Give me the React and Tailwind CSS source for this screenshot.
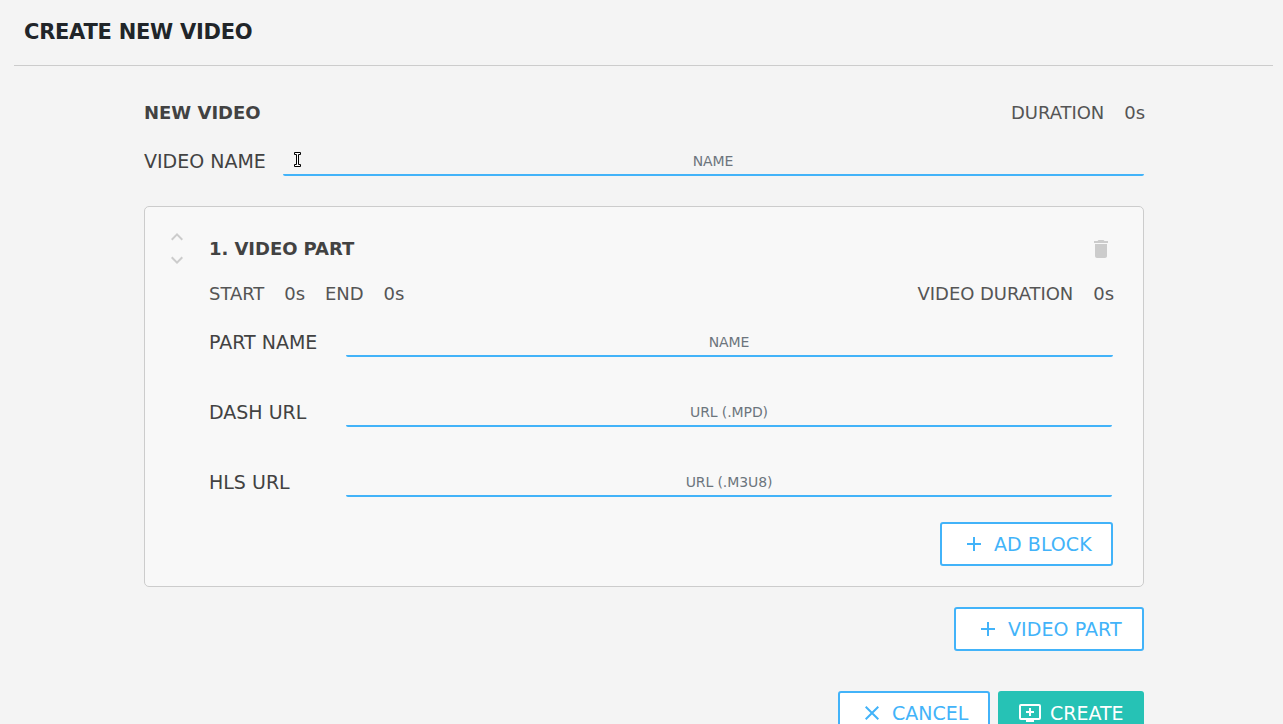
import React from "react";
import { MdDelete, MdKeyboardArrowDown, MdKeyboardArrowUp } from "react-icons/md";

function Field({ label, placeholder, labelClass, inputClass = "" }) {
  return (
    <div className="flex h-[35px]">
      <label className={`${labelClass} shrink-0 pt-[5px] text-[19px] leading-[30px] text-[#424242]`}>{label}</label>
      <input
        className={`${inputClass} h-[35px] min-w-0 flex-1 rounded-[2px] border-b-2 border-[#42b3f9] bg-transparent pt-[6px] pb-0 text-center text-[14px] tracking-[-0.1px] outline-none placeholder:text-[#6c757d]`}
        placeholder={placeholder}
      />
    </div>
  );
}

function Plus() {
  return (
    <svg className="h-[14px] w-[14px]" viewBox="0 0 14 14" fill="currentColor">
      <path d="M6 0h2v6h6v2H8v6H6V8H0V6h6z" />
    </svg>
  );
}

function Cross() {
  return (
    <svg className="h-[14px] w-[14px]" viewBox="0 0 14 14" fill="none" stroke="currentColor" strokeWidth="2">
      <path d="M.7.7l12.6 12.6M13.3.7L.7 13.3" />
    </svg>
  );
}

function AddScreen() {
  return (
    <svg className="h-[20px] w-[22px]" viewBox="0 0 22 20" fill="currentColor">
      <path fillRule="evenodd" d="M2 1h18a2 2 0 0 1 2 2v12a2 2 0 0 1-2 2h-5v2H7v-2H2a2 2 0 0 1-2-2V3a2 2 0 0 1 2-2zm0 2v12h18V3zM10 5h2v3h3v2h-3v3h-2v-3H7V8h3z" />
    </svg>
  );
}

const outline = "flex h-[44px] items-center rounded-[3px] border-2 border-[#42b3f9] bg-white text-[19px] text-[#42b3f9]";

export default function App() {
  return (
    <div className="h-[724px] overflow-hidden bg-[#f4f4f4] font-['DejaVu_Sans',sans-serif] text-[#555]">
      <header className="mr-[10px] ml-[14px] h-[66px] border-b border-[#ccc] pt-[17px] pl-[10px]">
        <h1 className="text-[21px] leading-[31px] font-bold tracking-[-0.27px] text-[#212529]">CREATE NEW VIDEO</h1>
      </header>

      <main className="ml-[144px] w-[1000px]">
        <div className="flex justify-between pt-[33px] text-[18px] leading-[28px]">
          <h2 className="font-bold text-[#424242]">NEW VIDEO</h2>
          <div className="-mr-px flex gap-[20px] tracking-[-0.05px]">
            <span>DURATION</span>
            <span>0s</span>
          </div>
        </div>

        <div className="relative mt-[14px]">
          <Field label="VIDEO NAME" placeholder="NAME" labelClass="w-[138.5px]" inputClass="mr-[0.5px]" />
          <svg className="absolute top-[10px] left-[149px] h-[17px] w-[9px]" viewBox="0 0 9 17">
            <path d="M1.5 1.5h6v2h-2v10h2v2h-6v-2h2v-10h-2z" fill="#fff" stroke="#000" />
          </svg>
        </div>

        <section className="mt-[30px] flex h-[381px] rounded-[5px] border border-[#ccc] bg-[#f8f8f8] pr-[30px]">
          <div className="flex w-[64px] shrink-0 flex-col items-center pt-[18px] text-[24px] text-[#ccc]">
            <MdKeyboardArrowUp />
            <MdKeyboardArrowDown className="-mt-px" />
          </div>
          <div className="min-w-0 flex-1">
            <div className="flex items-center justify-between pt-[28px]">
              <h3 className="text-[18px] leading-[28px] font-bold tracking-[-0.05px] text-[#424242]">1. VIDEO PART</h3>
              <MdDelete className="h-[24px] w-[24px] text-[#ccc]" />
            </div>
            <div className="mt-[17px] flex justify-between text-[18px] leading-[28px] tracking-[-0.05px]">
              <div className="flex gap-[20px]">
                <span>START</span>
                <span>0s</span>
                <span>END</span>
                <span>0s</span>
              </div>
              <div className="-mr-px flex gap-[20px]">
                <span>VIDEO DURATION</span>
                <span>0s</span>
              </div>
            </div>
            <div className="mt-[14px] flex flex-col gap-[35px]">
              <Field label="PART NAME" placeholder="NAME" labelClass="w-[136.5px]" inputClass="mr-[0.5px]" />
              <Field label="DASH URL" placeholder="URL (.MPD)" labelClass="w-[137px]" inputClass="mr-px" />
              <Field label="HLS URL" placeholder="URL (.M3U8)" labelClass="w-[137px]" inputClass="mr-px" />
            </div>
            <div className="mt-[25px] flex justify-end">
              <button className={`${outline} w-[173px] gap-[13px] pl-[25px]`}>
                <Plus />
                <span className="tracking-[0.05px]">AD BLOCK</span>
              </button>
            </div>
          </div>
        </section>

        <div className="mt-[20px] flex justify-end">
          <button className={`${outline} w-[190px] gap-[13px] pl-[25px]`}>
            <Plus />
            <span className="tracking-[0.08px]">VIDEO PART</span>
          </button>
        </div>

        <div className="mt-[40px] flex justify-end gap-[8px]">
          <button className={`${outline} w-[152px] gap-[13px] pl-[25px]`}>
            <Cross />
            <span>CANCEL</span>
          </button>
          <button className="flex h-[44px] w-[146px] items-center gap-[9px] rounded-[3px] bg-[#26c2b5] pl-[21px] text-[19px] text-white">
            <AddScreen />
            <span>CREATE</span>
          </button>
        </div>
      </main>
    </div>
  );
}
